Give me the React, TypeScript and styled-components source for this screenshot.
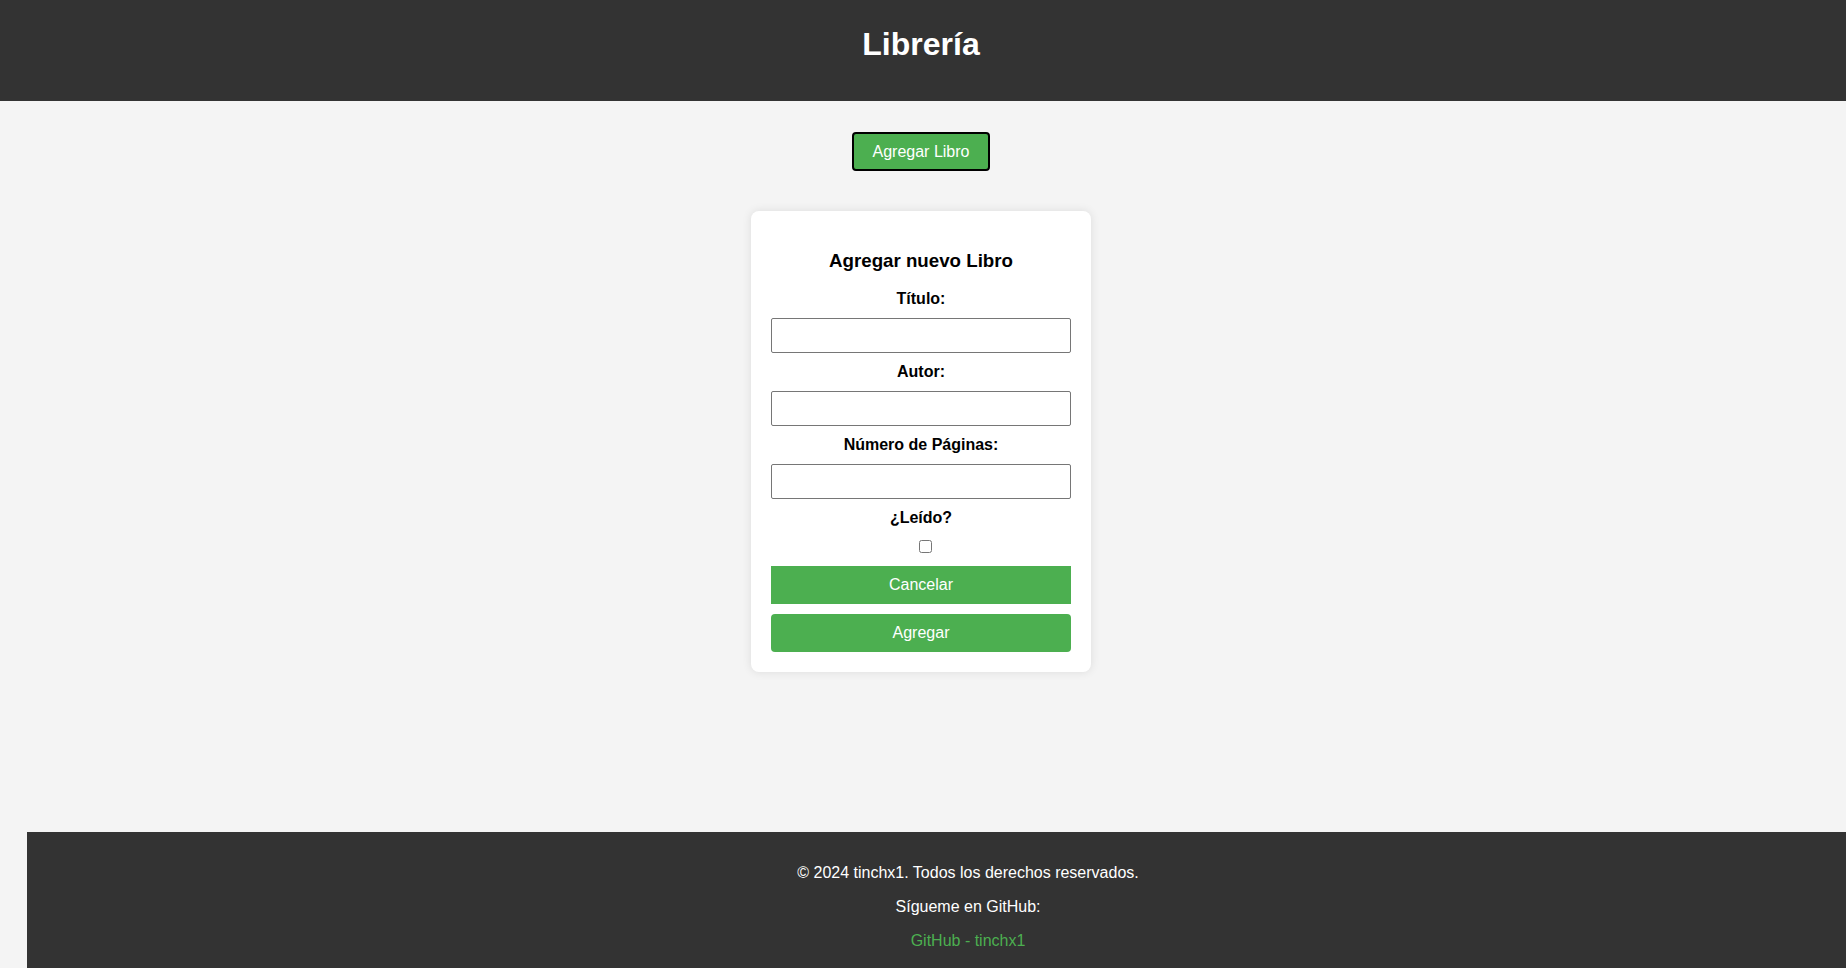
import styled, { createGlobalStyle } from 'styled-components'

const GlobalStyle = createGlobalStyle`
  body {
    margin: 0;
    font-family: "Liberation Sans", Arial, sans-serif;
    background-color: #f4f4f4;
    overflow-x: hidden;
  }
`

const Header = styled.header`
  padding: 26px 4px 38px 0;
  background-color: #333;
  color: #fff;
  text-align: center;
`
const Title = styled.h1`
  margin: 0;
  font-size: 32px;
  line-height: 37px;
`
const Main = styled.main`
  box-sizing: border-box;
  display: flex;
  flex-direction: column;
  align-items: center;
  min-height: 731px;
  padding: 31px 4px 0 0;
`
const OpenButton = styled.button`
  margin-bottom: 40px;
  padding: 8px 19px;
  font-family: inherit;
  font-size: 16px;
  line-height: 19px;
  color: #fff;
  background-color: #4caf50;
  border: 2px solid #000;
  border-radius: 4px;
`
const Card = styled.div`
  width: 300px;
  padding: 20px;
  background: #fff;
  border-radius: 8px;
  box-shadow: 0 0 10px rgba(0, 0, 0, 0.1);
`
const CardTitle = styled.h3`
  margin: 18.72px 0;
  font-size: 18.72px;
  line-height: 21.5px;
  text-align: center;
`
const Form = styled.form`
  display: flex;
  flex-direction: column;
  gap: 10px;
`
const Label = styled.label`
  font-size: 16px;
  font-weight: bold;
  line-height: 18px;
  text-align: center;
`
const Input = styled.input`
  box-sizing: border-box;
  width: 100%;
  height: 35px;
  margin: 0;
  padding: 0 8px;
  font-family: inherit;
  font-size: 16px;
  border: 1px solid #767676;
  border-radius: 2px;
`
const Check = styled.input`
  align-self: center;
  width: 13px;
  height: 13px;
  margin: 3px 0 3px 8px;
`
const FormButton = styled.button<{ $rounded?: boolean }>`
  height: 38px;
  padding: 10px;
  font-family: inherit;
  font-size: 16px;
  line-height: 18px;
  color: #fff;
  background-color: #4caf50;
  border: none;
  border-radius: ${(p) => (p.$rounded ? '4px' : '0')};
`
const Footer = styled.footer`
  margin-left: 27px;
  width: 100%;
  padding: 16px 16px 16px 18px;
  background-color: #333;
  color: #fff;
  text-align: center;

  p {
    margin: 16px 0;
    font-size: 16px;
    line-height: 18px;
  }

  a {
    color: #4caf50;
    text-decoration: none;
  }
`

export default function App() {
  return (
    <>
      <GlobalStyle />
      <Header>
        <Title>Librería</Title>
      </Header>
      <Main>
        <OpenButton type="button">Agregar Libro</OpenButton>
        <Card>
          <CardTitle>Agregar nuevo Libro</CardTitle>
          <Form onSubmit={(e) => e.preventDefault()}>
            <Label htmlFor="titulo">Título:</Label>
            <Input id="titulo" type="text" />
            <Label htmlFor="autor">Autor:</Label>
            <Input id="autor" type="text" />
            <Label htmlFor="paginas">Número de Páginas:</Label>
            <Input id="paginas" type="number" />
            <Label htmlFor="leido">¿Leído?</Label>
            <Check id="leido" type="checkbox" />
            <FormButton type="button">Cancelar</FormButton>
            <FormButton type="submit" $rounded>
              Agregar
            </FormButton>
          </Form>
        </Card>
      </Main>
      <Footer>
        <p>© 2024 tinchx1. Todos los derechos reservados.</p>
        <p>Sígueme en GitHub:</p>
        <p>
          <a href="#">GitHub - tinchx1</a>
        </p>
      </Footer>
    </>
  )
}
